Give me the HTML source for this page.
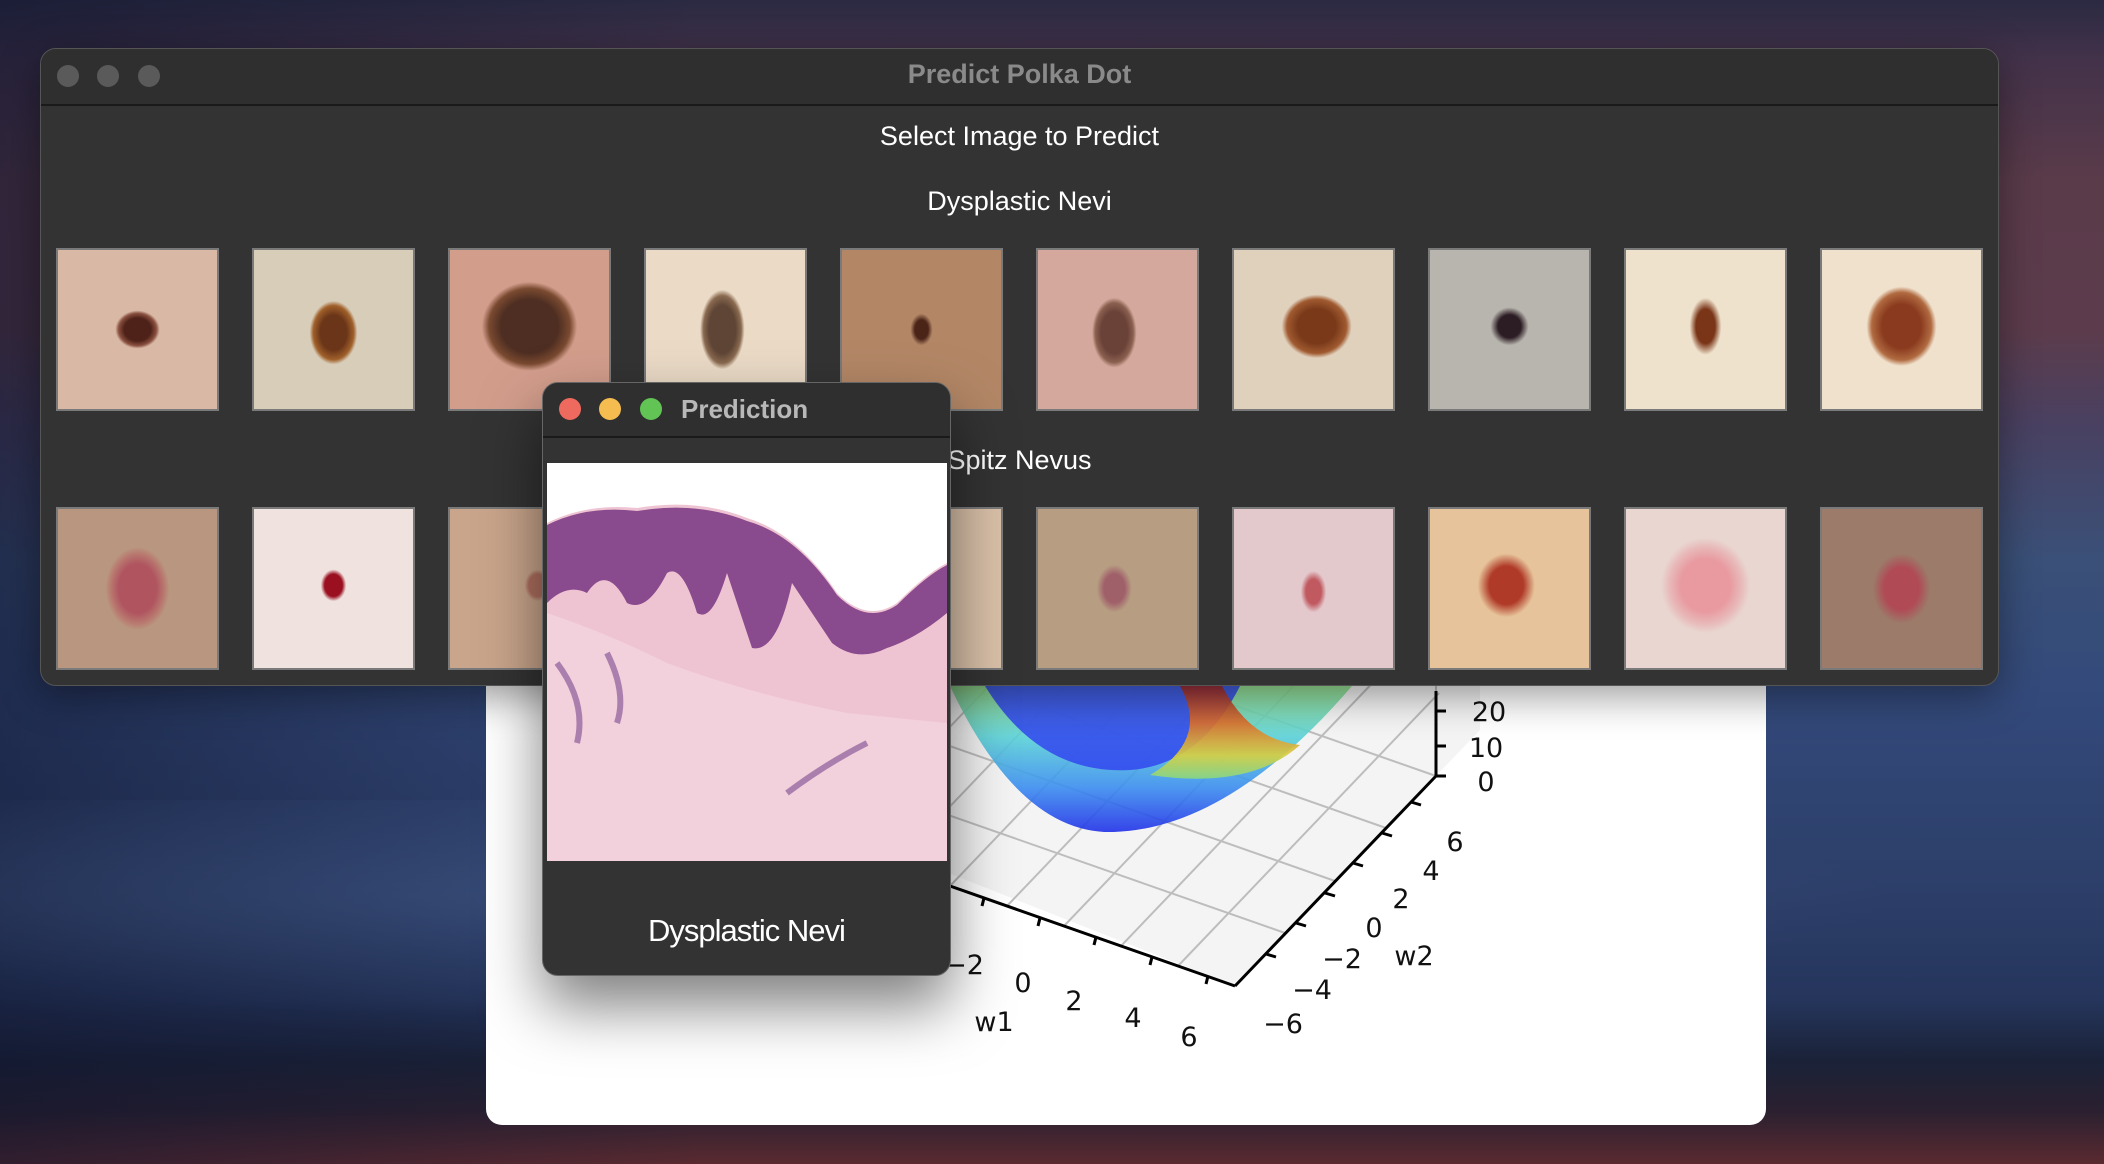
<!DOCTYPE html>
<html><head><meta charset="utf-8"><style>
*{margin:0;padding:0;box-sizing:border-box}
html,body{width:2104px;height:1164px;overflow:hidden}
body{position:relative;font-family:"Liberation Sans",sans-serif;
background:linear-gradient(180deg,#2a2a42 0px,#43324a 60px,#5a3b4a 180px,#5c3c4c 330px,#4a4060 420px,#3a5078 560px,#33497a 700px,#2c3e68 900px,#25355c 1000px,#1a2238 1060px,#2a2030 1110px,#5a2a30 1164px)}
.bgl{position:absolute;left:0;top:0;width:700px;height:1164px;background:linear-gradient(90deg,rgba(15,20,45,.55),rgba(15,20,45,0))}
.ice2{position:absolute;left:0;top:800px;width:2104px;height:240px;background:radial-gradient(ellipse 60% 50% at 30% 40%,rgba(80,110,160,.35),rgba(40,60,100,0))}
.win{position:absolute;background:#333333;border-radius:16px;border:1px solid #555;overflow:hidden}
.tb{position:absolute;left:0;top:0;right:0;height:57px;background:#2f2f2f;border-bottom:2px solid #1a1a1a}
.dot{position:absolute;width:22px;height:22px;border-radius:50%}
.lbl{position:absolute;left:0;right:0;text-align:center;color:#fff;font-size:27px}
.th{position:absolute;width:163px;height:163px;border:2px solid #7a7a7a}
</style></head><body>
<div class="bgl"></div><div class="ice2"></div>

<div style="position:absolute;left:486px;top:600px;width:1280px;height:525px;background:#fff;border-radius:0 0 16px 16px"></div>
<svg width="2104" height="1164" style="position:absolute;left:0;top:0">
<defs>
<clipPath id="pc"><rect x="486" y="600" width="1280" height="525"/></clipPath>
<linearGradient id="bowl" x1="0" y1="0" x2="0" y2="1">
<stop offset="0" stop-color="#8fe08a"/><stop offset=".35" stop-color="#5ad2d8"/><stop offset=".7" stop-color="#3a8cf0"/><stop offset="1" stop-color="#2030e8"/></linearGradient>
<linearGradient id="hot" x1="0" y1="0" x2="0" y2="1">
<stop offset="0" stop-color="#a02a2a"/><stop offset=".4" stop-color="#e0702a"/><stop offset=".75" stop-color="#d8d040"/><stop offset="1" stop-color="#8ad880"/></linearGradient>
</defs>
<g clip-path="url(#pc)">
<polygon points="700,600 560,720 1235,986 1480,730 1480,600" fill="#f4f4f4"/>
<g stroke="#bdbdbd" stroke-width="2">
<line x1="600" y1="693" x2="1285" y2="933"/><line x1="650" y1="641" x2="1335" y2="881"/>
<line x1="701" y1="588" x2="1386" y2="828"/><line x1="751" y1="536" x2="1436" y2="776"/>
<line x1="950" y1="886" x2="1211" y2="613"/><line x1="1007" y1="906" x2="1268" y2="633"/>
<line x1="1064" y1="926" x2="1325" y2="653"/><line x1="1121" y1="946" x2="1382" y2="673"/>
<line x1="1178" y1="966" x2="1439" y2="693"/><line x1="893" y1="866" x2="1154" y2="593"/>
<line x1="836" y1="846" x2="1097" y2="573"/><line x1="779" y1="826" x2="1040" y2="553"/>
<line x1="1436" y1="600" x2="1436" y2="776"/><line x1="1382" y1="600" x2="1382" y2="673"/>
</g>
<path d="M950,686 Q1020,835 1114,832 Q1230,828 1352,686 Z" fill="url(#bowl)" opacity=".9"/>
<path d="M985,686 Q1040,775 1130,770 Q1200,765 1240,686 Z" fill="#3346ee" opacity=".85"/>
<path d="M1180,686 L1222,686 Q1250,740 1300,745 Q1250,790 1150,775 Q1210,740 1180,686 Z" fill="url(#hot)" opacity=".9"/>
<g stroke="#000" stroke-width="3" fill="none">
<line x1="950" y1="886" x2="1235" y2="986"/><line x1="1235" y1="986" x2="1436" y2="776"/>
<line x1="1436" y1="691" x2="1436" y2="776"/>
<line x1="1436" y1="711" x2="1446" y2="711"/><line x1="1436" y1="746" x2="1446" y2="746"/>
<line x1="1436" y1="776" x2="1446" y2="776"/>
<line x1="1411" y1="802" x2="1421" y2="805"/><line x1="1382" y1="833" x2="1392" y2="836"/>
<line x1="1353" y1="863" x2="1363" y2="866"/><line x1="1325" y1="893" x2="1335" y2="896"/>
<line x1="1296" y1="923" x2="1306" y2="926"/><line x1="1266" y1="954" x2="1276" y2="957"/>
<line x1="984" y1="898" x2="982" y2="906"/><line x1="1040" y1="918" x2="1038" y2="926"/>
<line x1="1096" y1="937" x2="1094" y2="945"/><line x1="1152" y1="957" x2="1150" y2="965"/>
<line x1="1208" y1="976" x2="1206" y2="984"/>
</g>
<g font-family="DejaVu Sans,sans-serif" font-size="27" fill="#111" text-anchor="middle">
<text x="1489" y="721">20</text><text x="1486" y="757">10</text><text x="1486" y="791">0</text>
<text x="1455" y="851">6</text><text x="1431" y="880">4</text><text x="1401" y="908">2</text>
<text x="1374" y="937">0</text><text x="1342" y="968">−2</text><text x="1414" y="965">w2</text>
<text x="1312" y="999">−4</text><text x="1283" y="1033">−6</text>
<text x="964" y="974">−2</text><text x="1023" y="992">0</text><text x="1074" y="1010">2</text>
<text x="1133" y="1027">4</text><text x="1189" y="1046">6</text><text x="994" y="1031">w1</text>
</g>
</g>
</svg>

<div class="win" style="left:40px;top:48px;width:1959px;height:638px;box-shadow:0 10px 40px rgba(0,0,0,.4)">
<div class="tb"></div>
<div class="dot" style="left:16px;top:16px;background:#5a5a5a"></div>
<div class="dot" style="left:56px;top:16px;background:#5a5a5a"></div>
<div class="dot" style="left:97px;top:16px;background:#5a5a5a"></div>
<div style="position:absolute;left:0;right:0;top:10px;text-align:center;color:#8a8a8a;font-weight:bold;font-size:27px">Predict Polka Dot</div>
<div class="lbl" style="top:72px">Select Image to Predict</div>
<div class="lbl" style="top:137px">Dysplastic Nevi</div>
<div class="lbl" style="top:396px">Spitz Nevus</div>
</div>
<div class="th" style="left:56px;top:248px;background:radial-gradient(ellipse 14% 12% at 50% 50%,#4e2218 60%,#8a5040 85%,transparent 100%),#d9b9a6"></div>
<div class="th" style="left:252px;top:248px;background:radial-gradient(ellipse 15% 20% at 50% 52%,#6a3518 55%,#a0602a 85%,transparent 100%),#d8cdb9"></div>
<div class="th" style="left:448px;top:248px;background:radial-gradient(ellipse 30% 28% at 50% 48%,#4e2e22 60%,#7a4a30 85%,transparent 100%),#d39d8c"></div>
<div class="th" style="left:644px;top:248px;background:radial-gradient(ellipse 14% 25% at 48% 50%,#5e4535 60%,#8a6a50 85%,transparent 100%),#eadac6"></div>
<div class="th" style="left:840px;top:248px;background:radial-gradient(ellipse 7% 10% at 50% 50%,#4b2418 60%,transparent 100%),#b38766"></div>
<div class="th" style="left:1036px;top:248px;background:radial-gradient(ellipse 14% 22% at 48% 52%,#6b4238 60%,#8a6050 85%,transparent 100%),#d4a89c"></div>
<div class="th" style="left:1232px;top:248px;background:radial-gradient(ellipse 22% 20% at 52% 48%,#7a3a1a 55%,#a05a30 85%,transparent 100%),#e0d1bd"></div>
<div class="th" style="left:1428px;top:248px;background:radial-gradient(ellipse 12% 12% at 50% 48%,#2c1c24 60%,transparent 100%),#b8b5ae"></div>
<div class="th" style="left:1624px;top:248px;background:radial-gradient(ellipse 10% 18% at 50% 48%,#7a3518 60%,transparent 100%),#efe2cc"></div>
<div class="th" style="left:1820px;top:248px;background:radial-gradient(ellipse 22% 25% at 50% 48%,#8a3a1e 55%,#b06a40 85%,transparent 100%),#f0e1cc"></div>

<div class="th" style="left:56px;top:507px;background:radial-gradient(ellipse 20% 26% at 50% 50%,#b05560 60%,#b97a70 85%,transparent 100%),#b9967f"></div>
<div class="th" style="left:252px;top:507px;background:radial-gradient(ellipse 8% 10% at 50% 48%,#9a1020 70%,transparent 100%),#efe2df"></div>
<div class="th" style="left:448px;top:507px;background:radial-gradient(ellipse 8% 10% at 55% 48%,#b07060 70%,transparent 100%),#c9a58b"></div>
<div class="th" style="left:840px;top:507px;background:#d9c0a8"></div>
<div class="th" style="left:1036px;top:507px;background:radial-gradient(ellipse 11% 15% at 48% 50%,#a0606a 60%,transparent 100%),#b79d82"></div>
<div class="th" style="left:1232px;top:507px;background:radial-gradient(ellipse 8% 13% at 50% 52%,#c05a60 60%,transparent 100%),#e3c8cc"></div>
<div class="th" style="left:1428px;top:507px;background:radial-gradient(ellipse 18% 20% at 48% 48%,#b03a28 60%,transparent 100%),#e6c39a"></div>
<div class="th" style="left:1624px;top:507px;background:radial-gradient(ellipse 28% 30% at 50% 48%,#e89aa0 55%,#e8b8b8 80%,transparent 100%),#e9d6d0"></div>
<div class="th" style="left:1820px;top:507px;background:radial-gradient(ellipse 18% 22% at 50% 50%,#b04a55 60%,transparent 100%),#9c7b6a"></div>

<div class="win" style="left:542px;top:382px;width:409px;height:594px;box-shadow:0 30px 60px rgba(0,0,0,.5);border-color:#666">
<div class="tb" style="height:55px"></div>
<div class="dot" style="left:16px;top:15px;background:#ee6a5f"></div>
<div class="dot" style="left:56px;top:15px;background:#f5bd4f"></div>
<div class="dot" style="left:97px;top:15px;background:#61c454"></div>
<div style="position:absolute;left:138px;top:11px;color:#b8b8b8;font-weight:bold;font-size:26px">Prediction</div>
<svg style="position:absolute;left:4px;top:80px" width="400" height="398" viewBox="0 0 400 398">
<rect width="400" height="398" fill="#fff"/>
<path d="M0,60 Q40,40 90,45 Q150,35 200,55 Q250,70 290,130 Q320,160 350,140 Q380,110 400,100 L400,398 L0,398 Z" fill="#efc4d2"/>
<path d="M0,62 Q40,42 90,48 Q150,38 200,58 Q250,72 290,132 Q320,162 350,142 Q380,112 400,102 L400,150 Q370,175 340,185 Q310,200 285,180 Q265,150 245,120 Q230,190 205,185 Q190,140 180,110 Q165,160 150,150 Q135,100 120,110 Q100,150 80,140 Q60,100 40,130 Q20,120 0,140 Z" fill="#8a4a8e"/>
<path d="M0,150 Q60,170 120,200 Q200,230 300,250 L400,260 L400,398 L0,398 Z" fill="#f3d6df" opacity=".7"/>
<path d="M10,200 Q40,240 30,280 M60,190 Q80,230 70,260 M320,280 Q280,300 240,330" stroke="#7a4a90" stroke-width="6" fill="none" opacity=".6"/>
</svg>
<div style="position:absolute;left:0;right:0;top:530px;text-align:center;color:#fff;font-size:31px;letter-spacing:-1px">Dysplastic Nevi</div>
</div>
</body></html>
